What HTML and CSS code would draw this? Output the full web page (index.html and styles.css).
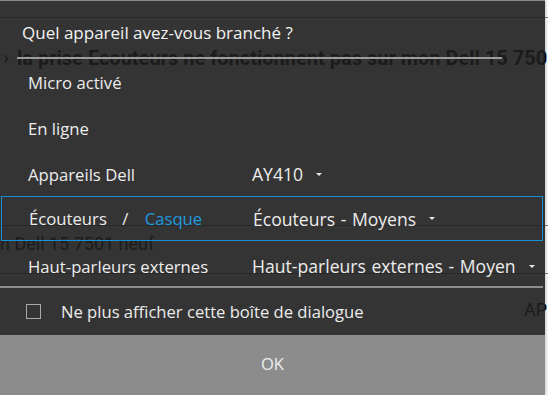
FILE: index.html
```html
<!DOCTYPE html>
<html lang="fr">
<head>
  <meta charset="UTF-8">
  <meta name="viewport" content="width=device-width, initial-scale=1.0">
  <title>Périphérique branché</title>
  <link rel="stylesheet" href="styles.css">
</head>
<body>
  <!-- page behind the dialog -->
  <div class="page">
    <div class="page-head"></div>
    <p class="page-title"><span class="chevron">›</span>la prise Ecouteurs ne fonctionnent pas sur mon Dell 15 7501</p>
    <div class="page-rule"></div>
    <p class="page-text">n Dell 15 7501 neuf</p>
    <div class="page-rule short"></div>
    <p class="page-tag">AP</p>
  </div>

  <div class="dialog">
    <h1 class="dialog-title">Quel appareil avez-vous branché ?</h1>
    <div class="title-rule"></div>

    <ul class="device-list">
      <li class="device">Micro activé</li>
      <li class="device">En ligne</li>
      <li class="device">
        <span class="device-name">Appareils Dell</span>
        <span class="picker"><span class="picker-value">AY410</span><span class="caret"></span></span>
      </li>
      <li class="device selected">
        <span class="device-name">Écouteurs <span class="slash">/</span> <span class="alt">Casque</span></span>
        <span class="picker"><span class="picker-value">Écouteurs - Moyens</span><span class="caret"></span></span>
      </li>
      <li class="device last">
        <span class="device-name">Haut-parleurs externes</span>
        <span class="picker"><span class="picker-value">Haut-parleurs externes - Moyens</span><span class="caret"></span></span>
      </li>
    </ul>

    <div class="separator"></div>

    <label class="dont-show">
      <span class="checkbox"></span>
      Ne plus afficher cette boîte de dialogue
    </label>

    <button class="ok-btn">OK</button>
  </div>
</body>
</html>
```

FILE: styles.css
```css
body {
  margin: 0;
  background-color: #fff;
  overflow: hidden;
  height: 395px;
  position: relative;
}

/* background page */
.page {
  font-family: Roboto, sans-serif;
  color: #000;
  white-space: nowrap;
}

.page-head {
  height: 17px;
  border-bottom: 1px solid #888;
}

.page-title {
  margin: 28px 0 0;
  padding-left: 3px;
  font-size: 20px;
  line-height: 24px;
  font-weight: bold;
}

.chevron {
  display: inline-block;
  width: 14px;
  font-weight: normal;
}

.page-rule {
  margin-top: 155px;
  border-top: 1px solid #888;
}

.page-text {
  margin: 7px 0 0;
  font-size: 18px;
  line-height: 22px;
}

.page-rule.short {
  margin-top: 18px;
}

.page-tag {
  margin: 25px 0 0;
  padding-left: 524px;
  font-size: 18px;
  line-height: 22px;
}

/* dialog */
.dialog {
  position: absolute;
  top: 0;
  left: 0;
  width: 545px;
  height: 395px;
  box-sizing: border-box;
  border-top: 1px solid #8a8a8a;
  background-color: rgba(30, 30, 30, 0.9);
  box-shadow: 1px 0 3px rgba(0, 0, 0, 0.25);
  display: flex;
  flex-direction: column;
  font-family: "Open Sans", sans-serif;
  color: #eee;
}

.dialog-title {
  margin: 21px 0 0 22px;
  font-size: 17px;
  line-height: 22px;
  font-weight: normal;
  color: #f2f2f2;
}

.title-rule {
  margin: 13px 0 0 17px;
  width: 485px;
  height: 2px;
  background-color: #9c9c9c;
}

.device-list {
  list-style: none;
  margin: 0;
  padding: 0;
}

.device {
  display: flex;
  align-items: center;
  height: 46px;
  padding-left: 28px;
  font-size: 16.7px;
  color: #ececec;
}

.device-name {
  width: 224px;
  flex-shrink: 0;
}

.slash {
  margin: 0 12px 0 11px;
}

.alt {
  color: #1e9be0;
}

.device.selected {
  height: 45px;
  margin: -1px 2px 0 1px;
  padding-left: 27px;
  border: 1px solid #1691d6;
  box-sizing: border-box;
}

.device.last {
  height: 45px;
  padding-top: 5px;
  box-sizing: border-box;
}

.picker {
  display: flex;
  align-items: center;
  max-width: 283px;
  font-size: 17.6px;
}

.picker-value {
  overflow: hidden;
  white-space: nowrap;
  word-spacing: 1px;
}

.caret {
  flex-shrink: 0;
  margin-left: 13px;
  width: 0;
  height: 0;
  border-left: 3.5px solid transparent;
  border-right: 3.5px solid transparent;
  border-top: 3.5px solid #e6e6e6;
}

.separator {
  margin-right: 2px;
  height: 2px;
  background-color: #8c8c8c;
}

.dont-show {
  display: flex;
  align-items: center;
  height: 47px;
  padding-left: 26px;
  font-size: 16.6px;
  color: #ececec;
}

.checkbox {
  width: 13px;
  height: 13px;
  border: 1px solid #a8a8a8;
  margin-right: 20px;
}

.ok-btn {
  flex: 1;
  border: none;
  background-color: #8c8c8c;
  color: #ececec;
  font-family: "Open Sans", sans-serif;
  font-size: 16.6px;
  padding: 0 0 4px;
}
```
